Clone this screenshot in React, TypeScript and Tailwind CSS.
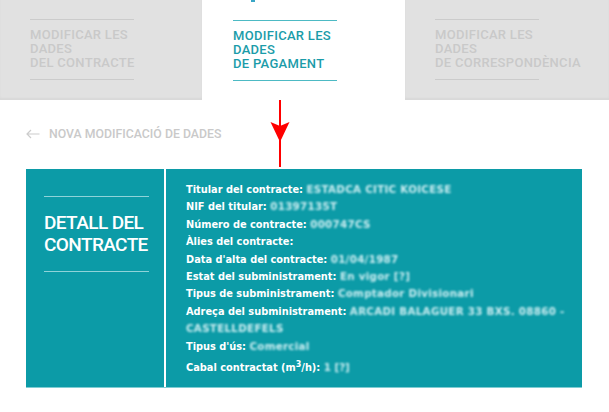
import React from 'react';

const rows: { label: React.ReactNode; value?: string; extra?: string }[] = [
  { label: 'Titular del contracte:', value: 'ESTADCA CITIC KOICESE' },
  { label: 'NIF del titular:', value: '01397135T' },
  { label: 'Número de contracte:', value: '000747CS' },
  { label: 'Àlies del contracte:' },
  { label: "Data d'alta del contracte:", value: '01/04/1987' },
  { label: 'Estat del subministrament:', value: 'En vigor [?]' },
  { label: 'Tipus de subministrament:', value: 'Comptador Divisionari' },
  { label: 'Adreça del subministrament:', value: 'ARCADI BALAGUER 33 BXS. 08860 -', extra: 'CASTELLDEFELS' },
  { label: "Tipus d'ús:", value: 'Comercial' },
];

function Tab({ lines, active }: { lines: string[]; active?: boolean }) {
  const line = active ? 'bg-[#4dbac4]' : 'bg-[#cbcbcb]';
  return (
    <div
      className={
        active
          ? 'flex-1 bg-white pl-[31px] pt-[20px]'
          : 'flex-1 bg-[#e1e1e1] pl-[30px] pt-[19px] shadow-[inset_0_-2px_2px_rgba(0,0,0,0.04)]'
      }
    >
      <div className={`w-[104px] h-px ${line}`} />
      <div
        className={`mt-[8px] text-[13px] leading-[14px] font-medium tracking-[0.3px] ${
          active ? 'text-[#1b9ca9]' : 'text-[#c9c9c9]'
        }`}
      >
        {lines.map((l) => (
          <div key={l}>{l}</div>
        ))}
      </div>
      <div className={`mt-[9px] w-[104px] h-px ${line}`} />
    </div>
  );
}

export default function App() {
  return (
    <div className="relative w-[609px] h-[412px] overflow-hidden bg-white font-['Roboto',sans-serif]">
      {/* tabs */}
      <div className="flex h-[100px]">
        <div className="w-[202px] flex">
          <Tab lines={['MODIFICAR LES', 'DADES', 'DEL CONTRACTE']} />
        </div>
        <div className="w-[203px] flex">
          <Tab active lines={['MODIFICAR LES', 'DADES', 'DE PAGAMENT']} />
        </div>
        <div className="w-[204px] flex">
          <Tab lines={['MODIFICAR LES', 'DADES', 'DE CORRESPONDÈNCIA']} />
        </div>
      </div>

      {/* back link */}
      <div className="flex items-center h-[14px] mt-[27px] pl-[26px] text-[#c9c9c9]">
        <svg width="14" height="10" viewBox="0 0 14 10" fill="none" stroke="#cccccc" strokeWidth="1.2">
          <path d="M13.5 5H1M5 1L1 5l4 4" />
        </svg>
        <span className="ml-[9px] text-[12.3px] font-medium leading-none">NOVA MODIFICACIÓ DE DADES</span>
      </div>

      {/* detail box */}
      <div className="mt-[28px] ml-[26px] w-[556px] h-[219px] flex bg-[#0c9ba7] border-b border-[#7fcdd3]">
        <div className="w-[138px] pl-[18px] pt-[27px]">
          <div className="w-[105px] h-px bg-[#8fd3d9]" />
          <div className="mt-[15px] text-white text-[19px] leading-[22px] font-medium tracking-[-0.6px]">
            <div>DETALL DEL</div>
            <div>CONTRACTE</div>
          </div>
          <div className="mt-[15px] w-[105px] h-px bg-[#8fd3d9]" />
        </div>
        <div className="w-[2px] bg-white" />
        <div className="flex-1 pl-[20px] pt-[12px] font-['DejaVu_Sans',sans-serif] text-[9.8px] leading-[17.4px] text-white font-bold">
          {rows.map((r, i) => (
            <div key={i}>
              <div className="whitespace-nowrap">
                <span>{r.label}</span>{' '}
                {r.value && (
                  <span className="text-[#cdeef2] text-[10.3px] tracking-[0.3px] blur-[1.1px] inline-block">
                    {r.value}
                  </span>
                )}
              </div>
              {r.extra && (
                <div className="text-[#cdeef2] text-[10.3px] tracking-[0.3px] blur-[1.1px]">{r.extra}</div>
              )}
            </div>
          ))}
          <div className="mt-[4px] whitespace-nowrap">
            <span>
              Cabal contractat (m<sup className="text-[8px]">3</sup>/h):
            </span>{' '}
            <span className="text-[#cdeef2] text-[10.3px] blur-[1.1px] inline-block">1 [?]</span>
          </div>
        </div>
      </div>

      {/* small mark at the top */}
      <div className="absolute left-[251px] top-0 w-[4px] h-[2px] bg-[#3aa6c6]" />

      {/* red annotation arrow */}
      <svg className="absolute left-[269px] top-[100px]" width="22" height="68" viewBox="0 0 22 68">
        <line x1="11" y1="0" x2="11" y2="67" stroke="#ff0000" strokeWidth="2" />
        <polygon points="1.5,22 11,26 20.5,22 11,42" fill="#ff0000" />
      </svg>
    </div>
  );
}
